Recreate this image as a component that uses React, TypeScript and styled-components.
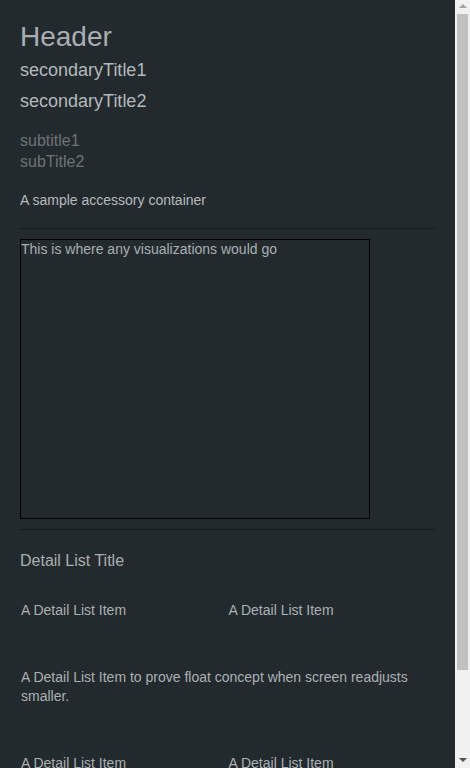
import React from "react";
import styled, { createGlobalStyle } from "styled-components";

const GlobalStyle = createGlobalStyle`
  html, body {
    margin: 0;
    padding: 0;
    background: #232a2e;
    overflow: hidden;
  }
  body {
    font-family: "Liberation Sans", Arial, sans-serif;
    color: #abb0b3;
  }
`;

const Frame = styled.div`
  display: flex;
  height: 100vh;
  background: #232a2e;
`;

const Content = styled.main`
  flex: 1;
  min-width: 0;
  overflow: hidden;
`;

const ScrollBar = styled.div`
  width: 15px;
  flex: none;
  display: flex;
  flex-direction: column;
  background: #f1f1f1;
`;

const ScrollButton = styled.div<{ $down?: boolean }>`
  height: 14px;
  flex: none;
  display: flex;
  justify-content: center;
  align-items: ${(p) => (p.$down ? "flex-start" : "flex-end")};
  padding: ${(p) => (p.$down ? "4px 0 0 0" : "0 0 6px 0")};
  box-sizing: border-box;
`;

const Arrow = styled.span<{ $down?: boolean }>`
  width: 0;
  height: 0;
  border-left: 4px solid transparent;
  border-right: 4px solid transparent;
  ${(p) =>
    p.$down
      ? "border-top: 4px solid #505050;"
      : "border-bottom: 4px solid #a3a3a3;"}
`;

const Track = styled.div`
  flex: 1;
  display: flex;
  flex-direction: column;
  padding: 0 2px;
`;

const Thumb = styled.div`
  height: 656px;
  background: #c1c1c1;
`;

const Page = styled.div`
  padding: 20px 20px 2px 20px;
  display: flex;
  flex-direction: column;
`;

const Header = styled.h1`
  margin: 0;
  font-size: 28px;
  line-height: 33px;
  font-weight: 400;
  color: #a9aeb1;
`;

const SecondaryTitle = styled.h2<{ $gap: number }>`
  margin: ${(p) => p.$gap}px 0 0 0;
  font-size: 18px;
  line-height: 22px;
  font-weight: 400;
  color: #b3b8bb;
`;

const Subtitles = styled.div`
  margin-top: 18px;
  display: flex;
  flex-direction: column;
`;

const Subtitle = styled.div`
  font-size: 16px;
  line-height: 21px;
  color: #6d7377;
`;

const Accessory = styled.div`
  margin-top: 19px;
  font-size: 14px;
  line-height: 18px;
  color: #b5babd;
`;

const Rule = styled.hr<{ $top: number; $bottom: number }>`
  margin: ${(p) => p.$top}px 0 ${(p) => p.$bottom}px 0;
  border: 0;
  height: 1px;
  background: #14191c;
`;

const VisBox = styled.div`
  box-sizing: border-box;
  width: 350px;
  height: 280px;
  border: 1px solid #000;
  font-size: 14px;
  line-height: 18px;
  color: #a9aeb1;
`;

const DetailTitle = styled.div`
  margin-top: 21px;
  font-size: 16px;
  line-height: 20px;
  color: #a9aeb1;
`;

const DetailList = styled.div`
  margin-top: 6px;
  display: grid;
  grid-template-columns: 1fr 1fr;
`;

const DetailItem = styled.div<{ $wide?: boolean }>`
  grid-column: ${(p) => (p.$wide ? "1 / span 2" : "auto")};
  padding: 24px 1px;
  font-size: 14px;
  line-height: 19px;
  color: #abb0b3;
`;

const items: { text: string; wide?: boolean }[] = [
  { text: "A Detail List Item" },
  { text: "A Detail List Item" },
  { text: "A Detail List Item to prove float concept when screen readjusts smaller.", wide: true },
  { text: "A Detail List Item" },
  { text: "A Detail List Item" },
  { text: "A Detail List Item" },
  { text: "A Detail List Item" },
];

export default function App() {
  return (
    <>
      <GlobalStyle />
      <Frame>
        <Content>
          <Page>
            <Header>Header</Header>
            <SecondaryTitle $gap={6}>secondaryTitle1</SecondaryTitle>
            <SecondaryTitle $gap={9}>secondaryTitle2</SecondaryTitle>
            <Subtitles>
              <Subtitle>subtitle1</Subtitle>
              <Subtitle>subTitle2</Subtitle>
            </Subtitles>
            <Accessory>A sample accessory container</Accessory>
            <Rule $top={19} $bottom={10} />
            <VisBox>This is where any visualizations would go</VisBox>
            <Rule $top={10} $bottom={0} />
            <DetailTitle>Detail List Title</DetailTitle>
            <DetailList>
              {items.map((it, i) => (
                <DetailItem key={i} $wide={it.wide}>
                  {it.text}
                </DetailItem>
              ))}
            </DetailList>
          </Page>
        </Content>
        <ScrollBar aria-hidden="true">
          <ScrollButton>
            <Arrow />
          </ScrollButton>
          <Track>
            <Thumb />
          </Track>
          <ScrollButton $down>
            <Arrow $down />
          </ScrollButton>
        </ScrollBar>
      </Frame>
    </>
  );
}
